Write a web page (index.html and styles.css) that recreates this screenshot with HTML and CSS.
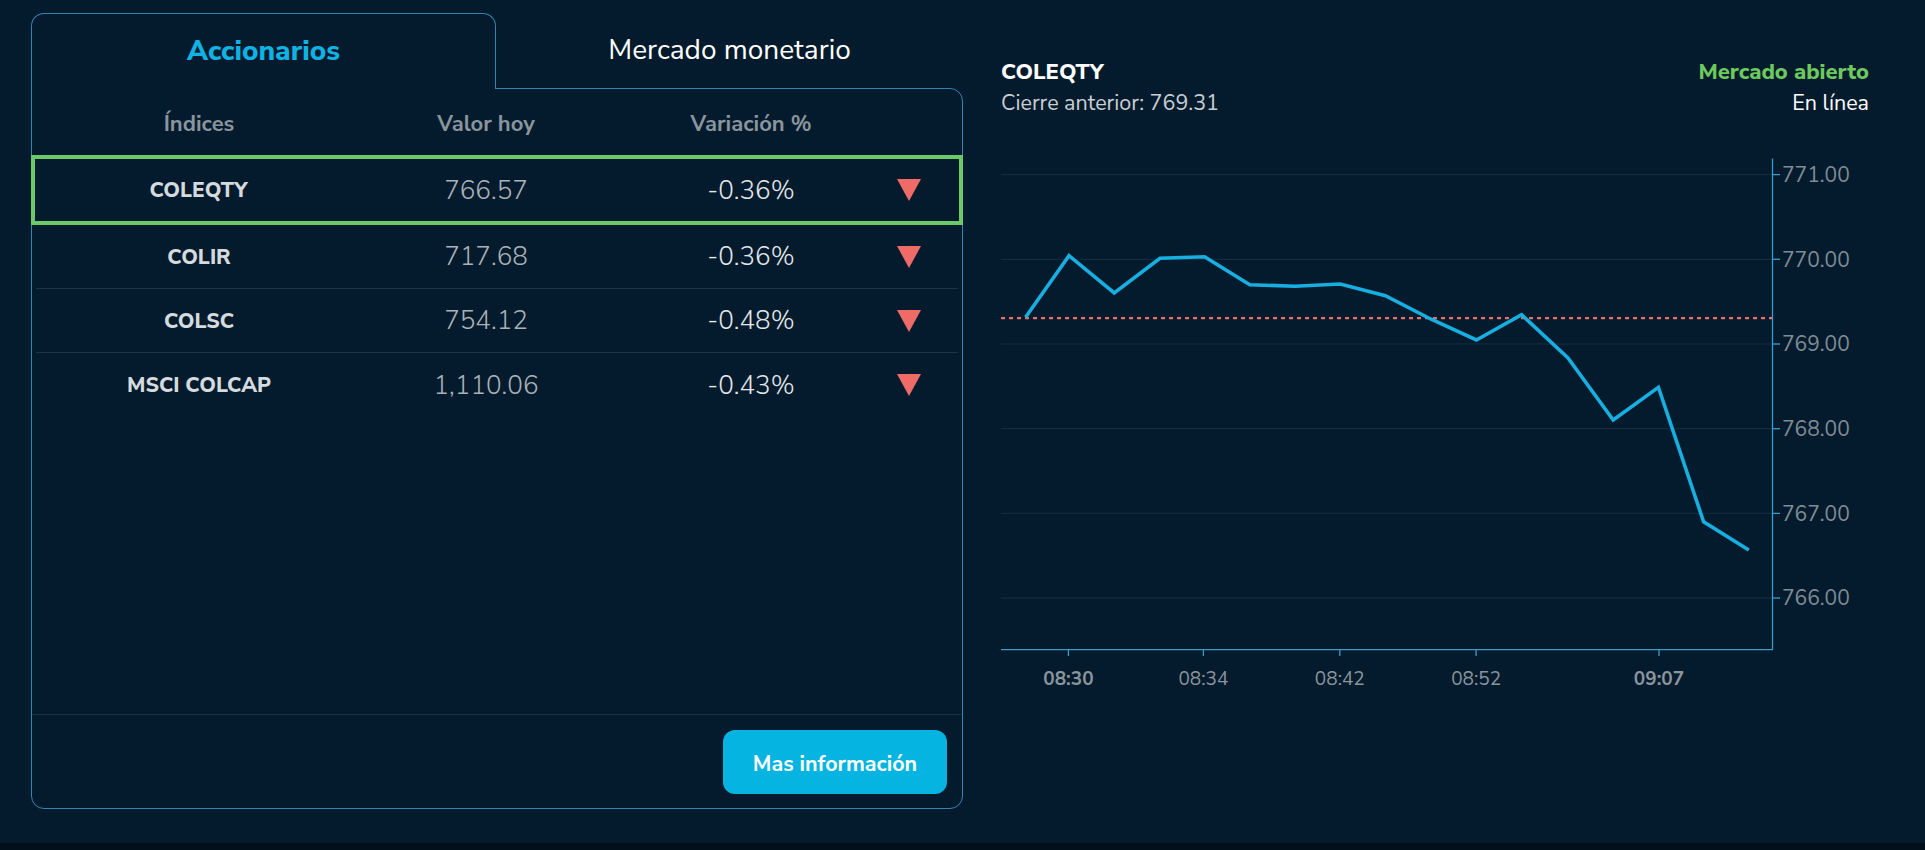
FILE: index.html
```html
<!DOCTYPE html>
<html lang="es">
<head>
<meta charset="utf-8">
<title>Índices</title>
<link rel="stylesheet" href="styles.css">
</head>
<body>
<div class="page">
  <section class="card">
    <div class="tabs">
      <div class="tab tab-active">Accionarios</div>
      <div class="tab tab-inactive">Mercado monetario</div>
    </div>
    <div class="panel">
      <div class="row head">
        <div class="c1">Índices</div>
        <div class="c2">Valor hoy</div>
        <div class="c3">Variación %</div>
        <div class="c4"></div>
      </div>
      <div class="row item selected">
        <div class="c1 name">COLEQTY</div>
        <div class="c2 val">766.57</div>
        <div class="c3 var">-0.36%</div>
        <div class="c4"><span class="down"></span></div>
      </div>
      <div class="row item line">
        <div class="c1 name">COLIR</div>
        <div class="c2 val">717.68</div>
        <div class="c3 var">-0.36%</div>
        <div class="c4"><span class="down"></span></div>
      </div>
      <div class="row item line">
        <div class="c1 name">COLSC</div>
        <div class="c2 val">754.12</div>
        <div class="c3 var">-0.48%</div>
        <div class="c4"><span class="down"></span></div>
      </div>
      <div class="row item">
        <div class="c1 name">MSCI COLCAP</div>
        <div class="c2 val">1,110.06</div>
        <div class="c3 var">-0.43%</div>
        <div class="c4"><span class="down"></span></div>
      </div>
      <div class="spacer"></div>
      <div class="footer">
        <button class="btn">Mas información</button>
      </div>
    </div>
  </section>

  <section class="chart-area">
    <div class="chart-head">
      <div class="left">
        <div class="sym">COLEQTY</div>
        <div class="prev">Cierre anterior: 769.31</div>
      </div>
      <div class="right">
        <div class="status">Mercado abierto</div>
        <div class="live">En línea</div>
      </div>
    </div>
    <svg class="chart" width="868" height="540" viewBox="0 0 868 540">
      <g class="grid">
        <line x1="0" y1="25.6" x2="771" y2="25.6"/>
        <line x1="0" y1="110.3" x2="771" y2="110.3"/>
        <line x1="0" y1="195" x2="771" y2="195"/>
        <line x1="0" y1="279.7" x2="771" y2="279.7"/>
        <line x1="0" y1="364.4" x2="771" y2="364.4"/>
        <line x1="0" y1="449" x2="771" y2="449"/>
      </g>
      <g class="axis">
        <line x1="771.5" y1="9.6" x2="771.5" y2="501"/>
        <line x1="0" y1="500.7" x2="772" y2="500.7"/>
        <line x1="771" y1="25.6" x2="779" y2="25.6"/>
        <line x1="771" y1="110.3" x2="779" y2="110.3"/>
        <line x1="771" y1="195" x2="779" y2="195"/>
        <line x1="771" y1="279.7" x2="779" y2="279.7"/>
        <line x1="771" y1="364.4" x2="779" y2="364.4"/>
        <line x1="771" y1="449" x2="779" y2="449"/>
        <line x1="67.4" y1="500.7" x2="67.4" y2="507"/>
        <line x1="202.4" y1="500.7" x2="202.4" y2="507"/>
        <line x1="338.8" y1="500.7" x2="338.8" y2="507"/>
        <line x1="475.1" y1="500.7" x2="475.1" y2="507"/>
        <line x1="658" y1="500.7" x2="658" y2="507"/>
      </g>
      <g class="ylab">
        <text x="781" y="33">771.00</text>
        <text x="781" y="118">770.00</text>
        <text x="781" y="202">769.00</text>
        <text x="781" y="287">768.00</text>
        <text x="781" y="372">767.00</text>
        <text x="781" y="456">766.00</text>
      </g>
      <g class="xlab">
        <text x="67.4" y="536" class="b">08:30</text>
        <text x="202.4" y="536">08:34</text>
        <text x="338.8" y="536">08:42</text>
        <text x="475.1" y="536">08:52</text>
        <text x="658" y="536" class="b">09:07</text>
      </g>
      <line class="prevline" x1="0" y1="169.2" x2="771" y2="169.2"/>
      <polyline class="series" points="24.6,168.3 68,106.7 113.2,144 159,109.3 203.6,107.7 248.8,135.7 294,137.3 339.2,135 384.4,146.7 429.6,170 475.4,191 520.6,165.7 567,209 612.2,271 657.4,238.3 702.6,372.7 747.8,401"/>
    </svg>
  </section>
</div>
<div class="bottom-strip"></div>
</body>
</html>
```

FILE: styles.css
```css
* { box-sizing: border-box; }

html, body {
  margin: 0;
  padding: 0;
  background: #041b2d;
  font-family: "Nunito Sans", Lato, "Open Sans", sans-serif;
  color: #ffffff;
  overflow: hidden;
}

.page {
  display: flex;
  gap: 38px;
  padding: 13px 0 0 31px;
  height: 843px;
}

/* ---------- Left card ---------- */
.card {
  width: 932px;
  height: 796px;
  display: flex;
  flex-direction: column;
}

.tabs {
  display: flex;
  height: 75px;
  flex: none;
}

.tab {
  display: flex;
  align-items: center;
  justify-content: center;
  font-size: 28px;
  padding-bottom: 2px;
}

.tab-active {
  width: 465px;
  border: 1px solid #3286b6;
  border-bottom: none;
  border-radius: 13px 13px 0 0;
  color: #0fb2e2;
  font-weight: 800;
  background: #041b2d;
  position: relative;
  z-index: 1;
  margin-bottom: -1px;
}

.tab-inactive {
  flex: 1;
  color: #ffffff;
  font-weight: 400;
}

.panel {
  flex: 1;
  display: flex;
  flex-direction: column;
  border: 1px solid #3286b6;
  border-radius: 0 13px 13px 13px;
}

.row {
  display: grid;
  grid-template-columns: 326px 248px 282px 1fr;
  align-items: center;
  margin: 0 4px;
}

.row > div { text-align: center; }
.row > .c4 { text-align: left; padding-left: 5px; display: flex; align-items: center; }

.head {
  height: 66px;
  font-size: 22px;
  font-weight: 700;
  color: #8a959d;
  padding-top: 3px;
}

.item { height: 64px; }

.item.line { border-bottom: 1px solid #1a3445; }

.selected {
  height: 70px;
  margin: 0 -1px;
  border: 4px solid #6cc96a;
  grid-template-columns: 327px 248px 282px 1fr;
}

.name {
  font-size: 21px;
  font-weight: 800;
  color: #d4dade;
}

.val {
  font-size: 26px;
  font-weight: 300;
  color: #a9b2b8;
}

.var {
  font-size: 26px;
  font-weight: 300;
  color: #e2e7ea;
}

.down {
  display: block;
  width: 0;
  height: 0;
  border-left: 12px solid transparent;
  border-right: 12px solid transparent;
  border-top: 22px solid #ef6b67;
}

.spacer { flex: 1; }

.footer {
  border-top: 1px solid #173142;
  display: flex;
  justify-content: flex-end;
  padding: 15px 15px 14px;
}

.btn {
  width: 224px;
  height: 64px;
  border: none;
  border-radius: 12px;
  background: #05b4e1;
  color: #ffffff;
  font-family: inherit;
  font-size: 21.5px;
  font-weight: 700;
  padding-top: 4px;
  cursor: pointer;
}

/* ---------- Right chart ---------- */
.chart-area {
  width: 868px;
  display: flex;
  flex-direction: column;
}

.chart-head {
  display: flex;
  justify-content: space-between;
  padding-top: 44px;
  line-height: 31px;
}

.sym { font-size: 22px; font-weight: 800; color: #ffffff; }
.prev { font-size: 21.5px; color: #c8cfd3; font-weight: 400; }
.right { text-align: right; }
.status { font-size: 22px; color: #6cc95e; font-weight: 800; }
.live { font-size: 21.5px; color: #ffffff; font-weight: 400; }

.chart {
  display: block;
  margin-top: 30px;
  overflow: visible;
}

.grid line { stroke: #143044; stroke-width: 1; }
.axis line { stroke: #3a9ccb; stroke-width: 1.3; }

.ylab text {
  fill: #7f8c96;
  font-size: 21px;
  font-weight: 400;
  font-family: "Nunito Sans", Lato, "Open Sans", sans-serif;
}

.xlab text {
  fill: #8a959d;
  font-size: 19px;
  font-weight: 400;
  text-anchor: middle;
  font-family: "Nunito Sans", Lato, "Open Sans", sans-serif;
}
.xlab text.b { font-weight: 700; }

.prevline {
  stroke: #e8706c;
  stroke-width: 2.2;
  stroke-dasharray: 4 4;
}

.series {
  fill: none;
  stroke: #17aee0;
  stroke-width: 3.6;
  stroke-linejoin: miter;
}

.bottom-strip {
  height: 7px;
  background: #02101b;
}
```
